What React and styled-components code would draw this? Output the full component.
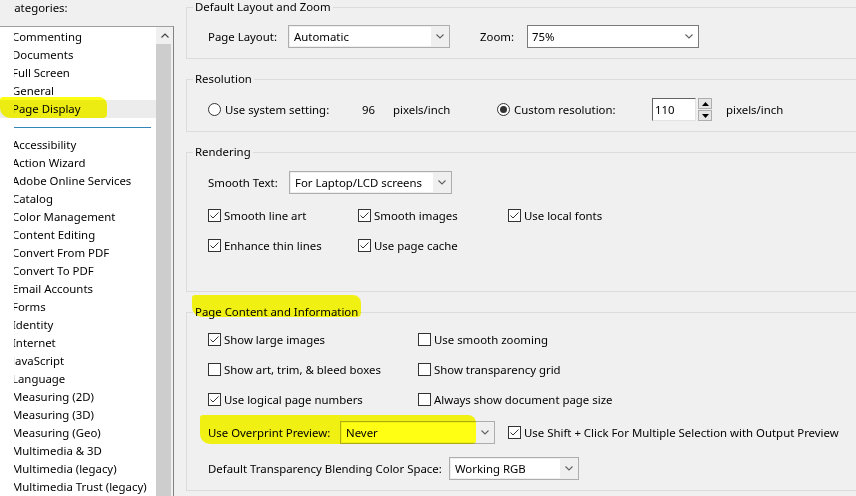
import styled, { createGlobalStyle } from "styled-components";

const GlobalStyle = createGlobalStyle`
  html, body {
    margin: 0;
    padding: 0;
    background: #f0f0f0;
  }
  body {
    font-family: "Noto Sans", "Segoe UI", sans-serif;
    font-size: 11.4px;
    color: #000;
  }
`;

const topCategories = ["Commenting", "Documents", "Full Screen", "General", "Page Display"];
const otherCategories = [
  "Accessibility",
  "Action Wizard",
  "Adobe Online Services",
  "Catalog",
  "Color Management",
  "Content Editing",
  "Convert From PDF",
  "Convert To PDF",
  "Email Accounts",
  "Forms",
  "Identity",
  "Internet",
  "JavaScript",
  "Language",
  "Measuring (2D)",
  "Measuring (3D)",
  "Measuring (Geo)",
  "Multimedia & 3D",
  "Multimedia (legacy)",
  "Multimedia Trust (legacy)",
];

function Chevron({ up }) {
  return (
    <svg width="8" height="5" viewBox="0 0 8 5">
      <polyline
        points={up ? "0.5,4.5 4,1 7.5,4.5" : "0.5,0.5 4,4 7.5,0.5"}
        fill="none"
        stroke={up ? "#404040" : "#606060"}
        strokeWidth="1.1"
      />
    </svg>
  );
}

function Dropdown({ width, value, editable }) {
  return (
    <SelectBox $w={width} $editable={editable}>
      <SelectValue $editable={editable}>{value}</SelectValue>
      <SelectArrow>
        <Chevron />
      </SelectArrow>
    </SelectBox>
  );
}

function Check({ width, checked, children }) {
  return (
    <Option $w={width}>
      <Box>
        {checked && (
          <svg width="11" height="11" viewBox="0 0 11 11">
            <polyline points="1.5,5.5 4,8 9.5,2.5" fill="none" stroke="#333" strokeWidth="1" />
          </svg>
        )}
      </Box>
      {children}
    </Option>
  );
}

function Radio({ width, checked, children }) {
  return (
    <Option $w={width}>
      <Circle>{checked && <Dot />}</Circle>
      {children}
    </Option>
  );
}

function Spinner() {
  return (
    <SpinGroup>
      <SpinButton>
        <svg width="7" height="4" viewBox="0 0 7 4">
          <polygon points="0,4 3.5,0 7,4" fill="#000" />
        </svg>
      </SpinButton>
      <SpinButton>
        <svg width="7" height="4" viewBox="0 0 7 4">
          <polygon points="0,0 3.5,4 7,0" fill="#000" />
        </svg>
      </SpinButton>
    </SpinGroup>
  );
}

export default function App() {
  return (
    <>
      <GlobalStyle />
      <Window>
        <Sidebar>
          <SideLabel>
            <Clip>
              <Shifted $by={7}>Categories:</Shifted>
            </Clip>
          </SideLabel>
          <ListBox>
            <Items>
              {topCategories.map((c) => (
                <Item key={c} $selected={c === "Page Display"}>
                  <Clip>
                    <Shifted $by={2}>{c}</Shifted>
                  </Clip>
                </Item>
              ))}
              <Separator />
              {otherCategories.map((c) => (
                <Item key={c}>
                  <Clip>
                    <Shifted $by={2}>{c}</Shifted>
                  </Clip>
                </Item>
              ))}
            </Items>
            <ScrollBar>
              <ScrollButton>
                <Chevron up />
              </ScrollButton>
              <Thumb />
            </ScrollBar>
          </ListBox>
        </Sidebar>

        <Main>
          <Group $pt={10} $pb={10}>
            <Legend>Default Layout and Zoom</Legend>
            <Row $h={23}>
              <FieldLabel $w={80}>Page Layout:</FieldLabel>
              <Dropdown width={162} value="Automatic" />
              <FieldLabel $w={47} $ml={30}>Zoom:</FieldLabel>
              <Dropdown width={172} value="75%" editable />
            </Row>
          </Group>

          <Group $pt={11} $pb={10}>
            <Legend>Resolution</Legend>
            <Row $h={23}>
              <Radio width={154}>Use system setting:</Radio>
              <FieldLabel $w={31}>96</FieldLabel>
              <FieldLabel $w={104}>pixels/inch</FieldLabel>
              <Radio width={155} checked>
                Custom resolution:
              </Radio>
              <NumberInput>110</NumberInput>
              <Spinner />
              <FieldLabel $ml={14}>pixels/inch</FieldLabel>
            </Row>
          </Group>

          <Group $pt={11} $pb={31}>
            <Legend>Rendering</Legend>
            <Row $h={23}>
              <FieldLabel $w={81}>Smooth Text:</FieldLabel>
              <Dropdown width={163} value="For Laptop/LCD screens" />
            </Row>
            <Row $h={30} $mt={6}>
              <Check width={150} checked>Smooth line art</Check>
              <Check width={150} checked>Smooth images</Check>
              <Check width={150} checked>Use local fonts</Check>
            </Row>
            <Row $h={30}>
              <Check width={150} checked>Enhance thin lines</Check>
              <Check width={150} checked>Use page cache</Check>
            </Row>
          </Group>

          <Group $pt={4} $pb={5}>
            <Legend>Page Content and Information</Legend>
            <Row $h={30}>
              <Check width={210} checked>Show large images</Check>
              <Check width={210}>Use smooth zooming</Check>
            </Row>
            <Row $h={30}>
              <Check width={210}>Show art, trim, &amp; bleed boxes</Check>
              <Check width={210}>Show transparency grid</Check>
            </Row>
            <Row $h={30}>
              <Check width={210} checked>Use logical page numbers</Check>
              <Check width={210}>Always show document page size</Check>
            </Row>
            <Row $h={37}>
              <FieldLabel $w={132}>Use Overprint Preview:</FieldLabel>
              <Dropdown width={155} value="Never" />
              <Spacer $w={13} />
              <Check checked>Use Shift + Click For Multiple Selection with Output Preview</Check>
            </Row>
            <Row $h={34}>
              <FieldLabel $w={241}>Default Transparency Blending Color Space:</FieldLabel>
              <Dropdown width={130} value="Working RGB" />
            </Row>
          </Group>
        </Main>

        <Highlight $x={0} $y={97} $w={107} $h={21} />
        <Highlight $x={192} $y={295} $w={169} $h={22} />
        <Highlight $x={200} $y={415} $w={276} $h={29} />
      </Window>
    </>
  );
}

const Window = styled.div`
  position: relative;
  display: flex;
  width: 856px;
  height: 496px;
  overflow: hidden;
  background: #f0f0f0;
`;

const Sidebar = styled.div`
  display: flex;
  flex-direction: column;
  width: 174px;
  flex-shrink: 0;
`;

const SideLabel = styled.div`
  height: 26px;
  padding-left: 14px;
  line-height: 15px;
`;

const Clip = styled.span`
  display: block;
  overflow: hidden;
  white-space: nowrap;
`;

const Shifted = styled.span`
  display: inline-block;
  margin-left: -${(p) => p.$by}px;
`;

const ListBox = styled.div`
  flex: 1;
  display: flex;
  background: #fff;
  border-top: 1px solid #a0a0a0;
  border-right: 1px solid #828282;
  min-height: 0;
`;

const Items = styled.div`
  flex: 1;
  display: flex;
  flex-direction: column;
  padding-top: 1px;
`;

const Item = styled.div`
  flex-shrink: 0;
  height: 18px;
  line-height: 18px;
  padding-left: 14px;
  background: ${(p) => (p.$selected ? "#ececec" : "transparent")};
`;

const Separator = styled.div`
  flex-shrink: 0;
  height: 18px;
  margin: 0 5px 0 14px;
  background: linear-gradient(#3286b9, #3286b9) 0 9px / 100% 1px no-repeat;
`;

const ScrollBar = styled.div`
  width: 17px;
  display: flex;
  flex-direction: column;
  background: #f0f0f0;
`;

const ScrollButton = styled.div`
  height: 17px;
  display: flex;
  align-items: center;
  justify-content: center;
`;

const Thumb = styled.div`
  flex: 1;
  margin-right: 2px;
  background: #cdcdcd;
`;

const Main = styled.div`
  display: flex;
  flex-direction: column;
  margin-top: -1px;
  padding-left: 12px;
`;

const Group = styled.fieldset`
  width: 720px;
  margin: 0 0 12px 0;
  border: 1px solid #dcdcdc;
  padding: ${(p) => p.$pt}px 0 ${(p) => p.$pb}px 21px;
  min-width: 0;
`;

const Legend = styled.legend`
  padding: 0 2px;
  margin-left: -15px;
  line-height: 16px;
`;

const Row = styled.div`
  display: flex;
  align-items: center;
  height: ${(p) => p.$h}px;
  margin-top: ${(p) => p.$mt || 0}px;
  white-space: nowrap;
`;

const FieldLabel = styled.span`
  flex-shrink: 0;
  width: ${(p) => (p.$w ? `${p.$w}px` : "auto")};
  margin-left: ${(p) => p.$ml || 0}px;
`;

const Spacer = styled.span`
  width: ${(p) => p.$w}px;
  flex-shrink: 0;
`;

const SelectBox = styled.div`
  display: flex;
  flex-shrink: 0;
  box-sizing: border-box;
  width: ${(p) => p.$w}px;
  height: 23px;
  border: 1px solid ${(p) => (p.$editable ? "#7a7a7a" : "#adadad")};
  background: ${(p) => (p.$editable ? "#fff" : "#efefef")};
`;

const SelectValue = styled.div`
  flex: 1;
  display: flex;
  align-items: center;
  margin: 1px 0 1px 1px;
  padding-left: ${(p) => (p.$editable ? 3 : 4)}px;
  background: #fff;
`;

const SelectArrow = styled.div`
  width: 18px;
  display: flex;
  align-items: center;
  justify-content: center;
`;

const Option = styled.label`
  display: flex;
  align-items: center;
  flex-shrink: 0;
  width: ${(p) => (p.$w ? `${p.$w}px` : "auto")};
`;

const Box = styled.span`
  width: 13px;
  height: 13px;
  box-sizing: border-box;
  border: 1px solid #333;
  background: #fff;
  margin-right: 3px;
  display: flex;
  align-items: center;
  justify-content: center;
`;

const Circle = styled.span`
  width: 13px;
  height: 13px;
  box-sizing: border-box;
  border: 1px solid #333;
  border-radius: 50%;
  background: #fff;
  margin-right: 4px;
  display: flex;
  align-items: center;
  justify-content: center;
`;

const Dot = styled.span`
  width: 7px;
  height: 7px;
  border-radius: 50%;
  background: #333;
`;

const NumberInput = styled.div`
  flex-shrink: 0;
  box-sizing: border-box;
  width: 44px;
  height: 23px;
  padding-left: 2px;
  display: flex;
  align-items: center;
  background: #fff;
  border: 1px solid;
  border-color: #646464 #e3e3e3 #e3e3e3 #646464;
`;

const SpinGroup = styled.div`
  display: flex;
  flex-direction: column;
  gap: 1px;
  margin-left: 2px;
`;

const SpinButton = styled.div`
  box-sizing: border-box;
  width: 14px;
  height: 11px;
  display: flex;
  align-items: center;
  justify-content: center;
  background: #e5e5e5;
  border: 1px solid #adadad;
`;

const Highlight = styled.div`
  position: absolute;
  left: ${(p) => p.$x}px;
  top: ${(p) => p.$y}px;
  width: ${(p) => p.$w}px;
  height: ${(p) => p.$h}px;
  background: #ffff00;
  mix-blend-mode: multiply;
  border-radius: 3px 8px 4px 10px;
  opacity: 0.92;
`;
